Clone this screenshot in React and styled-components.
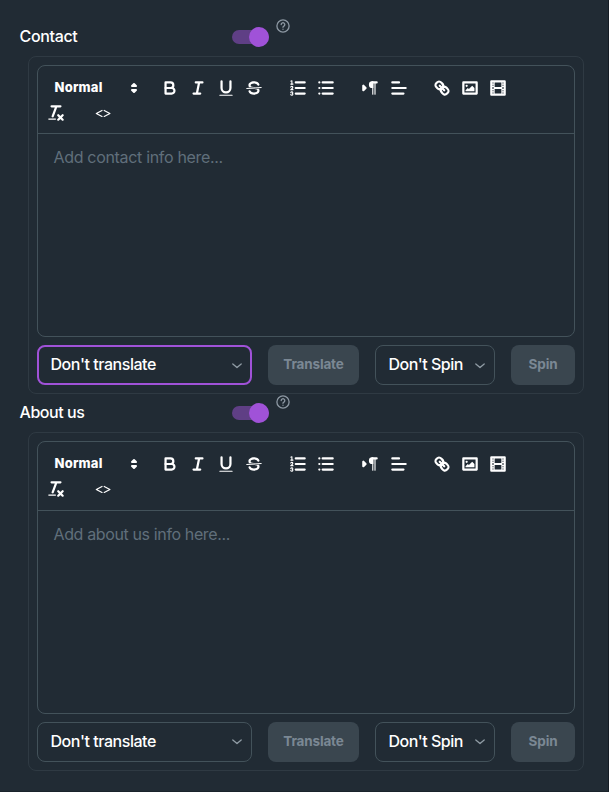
import React from "react";
import styled, { createGlobalStyle } from "styled-components";

const Global = createGlobalStyle`
  *, *::before, *::after { box-sizing: border-box; }
  body {
    margin: 0;
    background: #212b34;
    color: #fff;
    font-family: "Inter", "Liberation Sans", sans-serif;
  }
`;

const Page = styled.main`
  height: 792px;
  padding: 0 24px 0 19px;
  border-right: 1px solid #151c24;
  border-bottom: 1px solid #1a232b;
  overflow: hidden;
`;

const Section = styled.section`
  height: 376.4px;
`;

const Header = styled.div`
  display: flex;
  height: 56px;
  padding-top: 17px;
  align-items: flex-start;
  ${Section} + ${Section} & { padding-top: 16.6px; }
`;

const Title = styled.h2`
  width: 213px;
  margin: 0;
  padding-left: 0.5px;
  font-size: 16px;
  font-weight: 500;
  line-height: 39px;
  letter-spacing: ${(p) => p.$tracking}px;
`;

const Switch = styled.button`
  display: flex;
  align-items: center;
  justify-content: flex-end;
  width: 37px;
  height: 14px;
  margin-top: 13px;
  padding: 0;
  border: 0;
  border-radius: 7px;
  background: #5f3f85;
`;

const Thumb = styled.span`
  flex: none;
  width: 20px;
  height: 20px;
  border-radius: 50%;
  background: #a052d8;
`;

const HelpIcon = styled.svg`
  width: 14px;
  height: 14px;
  margin: 2px 0 0 7px;
  fill: none;
  stroke: #8d98a3;
  stroke-width: 1.3;
  stroke-linecap: round;
`;

const Card = styled.div`
  height: 338.2px;
  margin-left: 9px;
  padding: 8px;
  border: 1px solid #2f3a43;
  border-radius: 8px;
`;

const Editor = styled.div`
  height: 272.2px;
  border: 1px solid #43525a;
  border-radius: 8px;
`;

const Toolbar = styled.div`
  display: flex;
  flex-wrap: wrap;
  align-content: flex-start;
  row-gap: 1px;
  height: 68.3px;
  padding: 10px 8px 0 4px;
  border-bottom: 1px solid #43525a;
`;

const Group = styled.div`
  display: flex;
  height: 24px;
  margin-right: ${(p) => p.$gap ?? 16}px;
`;

const Tool = styled.button`
  display: flex;
  width: 28px;
  height: 24px;
  padding: ${(p) => (p.$shifted ? "1.5px 3px 2px 5px" : "2px 4px")};
  border: 0;
  background: none;
`;

const Glyph = styled.svg`
  flex: none;
  width: ${(p) => p.$size}px;
  height: ${(p) => p.$size}px;
  fill: none;
  stroke: #fff;
  stroke-width: 2;
  stroke-linecap: round;
  stroke-linejoin: round;

  .fill { fill: #fff; stroke: none; }
  .both { fill: #fff; }
  .thin { stroke-width: 1; }
  .code { stroke-width: 1.1; }
`;

const FormatPicker = styled.button`
  display: flex;
  justify-content: space-between;
  width: 101px;
  height: 24px;
  padding: 3px 0 0 12.5px;
  border: 0;
  background: none;
  color: #fff;
  font: 800 13px/17px "Inter", sans-serif;
  letter-spacing: 0.2px;
`;

const Placeholder = styled.p`
  margin: 0;
  padding: 11px 15.5px;
  color: #606f7b;
  font-size: 16px;
  line-height: 24px;
  letter-spacing: ${(p) => p.$tracking}px;
`;

const Actions = styled.div`
  display: grid;
  grid-template-columns: 215px 91px 120px 64px;
  gap: 16px;
  height: 40px;
  margin-top: 8px;
`;

const Select = styled.button`
  display: flex;
  align-items: center;
  justify-content: space-between;
  padding: ${(p) => (p.$active ? "0 7px 2px 11.5px" : "0 8px 2px 12.5px")};
  border: ${(p) => (p.$active ? "2px solid #a052d8" : "1px solid #43525a")};
  border-radius: 8px;
  background: none;
  color: #fff;
  font: 500 16px/24px "Inter", sans-serif;
  letter-spacing: ${(p) => p.$tracking}px;
  white-space: nowrap;
`;

const Chevron = styled.svg`
  flex: none;
  width: 12px;
  height: 12px;
  margin-top: 3px;
  fill: none;
  stroke: #909ca5;
  stroke-width: 1.3;
  stroke-linecap: round;
  stroke-linejoin: round;
`;

const Action = styled.button`
  padding: 0 0 2px;
  border: 0;
  border-radius: 8px;
  background: #3a464f;
  color: #7b8894;
  font: 700 13.5px/20px "Inter", sans-serif;
  letter-spacing: ${(p) => p.$tracking}px;
`;

const icons = {
  bold: (
    <>
      <path d="M5,4H9.5A2.5,2.5,0,0,1,12,6.5v0A2.5,2.5,0,0,1,9.5,9H5Z" />
      <path d="M5,9h5.5A2.5,2.5,0,0,1,13,11.5v0A2.5,2.5,0,0,1,10.5,14H5Z" />
    </>
  ),
  italic: <path d="M7,4H13M5,14H11M8,14L10,4" />,
  underline: (
    <>
      <path d="M5,3V9a4.012,4.012,0,0,0,4,4H9a4.012,4.012,0,0,0,4-4V3" />
      <rect className="fill" x="3" y="15" width="12" height="1" rx="0.5" />
    </>
  ),
  strike: (
    <>
      <path className="thin" d="M15.5,8.5L2.5,9.5" />
      <path className="fill" d="M9.007,8C6.542,7.791,6,7.519,6,6.5,6,5.792,7.283,5,9,5c1.571,0,2.765.679,2.969,1.309a1,1,0,0,0,1.9-.617C13.356,4.106,11.354,3,9,3,6.2,3,4,4.538,4,6.5a3.2,3.2,0,0,0,.5,1.843Z" />
      <path className="fill" d="M8.984,10C11.457,10.208,12,10.479,12,11.5c0,.708-1.283,1.5-3,1.5-1.571,0-2.765-.679-2.969-1.309a1,1,0,1,0-1.9.617C4.644,13.894,6.646,15,9,15c2.8,0,5-1.538,5-3.5a3.2,3.2,0,0,0-.5-1.843Z" />
    </>
  ),
  ordered: (
    <>
      <path d="M7,4H15M7,9H15M7,14H15" />
      <path className="thin" d="M2.5,5.5H4.5" />
      <path className="fill" d="M3.5,6A.5.5,0,0,1,3,5.5V3.085l-.276.138A.5.5,0,0,1,2.053,3c-.124-.247-.023-.324.224-.447l1-.5A.5.5,0,0,1,4,2.5v3A.5.5,0,0,1,3.5,6Z" />
      <path className="thin" d="M4.5,10.5h-2c0-.234,1.85-1.076,1.85-2.234A.959.959,0,0,0,2.5,8.156" />
      <path className="thin" d="M2.5,14.846a.959.959,0,0,0,1.85-.109A.7.7,0,0,0,3.75,14a.688.688,0,0,0,.6-.736.959.959,0,0,0-1.85-.109" />
    </>
  ),
  bullet: <path d="M6,4H15M6,9H15M6,14H15M3,4H3.01M3,9H3.01M3,14H3.01" />,
  direction: (
    <>
      <path className="both" d="M3,11L5,9L3,7Z" />
      <path d="M15,4H11" />
      <path className="fill" d="M11,3a3,3,0,0,0,0,6h1V3Z" />
      <rect className="fill" x="11" y="4" width="1" height="11" />
      <rect className="fill" x="13" y="4" width="1" height="11" />
    </>
  ),
  align: <path d="M3,4H9M3,9H15M3,14H13" />,
  link: (
    <>
      <path d="M7,7L11,11" />
      <path d="M8.9,4.577a3.476,3.476,0,0,1,.36,4.679A3.476,3.476,0,0,1,4.577,8.9C3.185,7.5,2.035,6.4,4.217,4.217S7.5,3.185,8.9,4.577Z" />
      <path d="M13.423,9.1a3.476,3.476,0,0,0-4.679-.36,3.476,3.476,0,0,0,.36,4.679c1.392,1.392,2.5,2.542,4.679.36S14.815,10.5,13.423,9.1Z" />
    </>
  ),
  image: (
    <>
      <rect x="3" y="4" width="12" height="10" />
      <circle className="fill" cx="6" cy="7" r="1" />
      <path className="fill" d="M5,12V11L7,9L8,10L11,7L13,9V12Z" />
    </>
  ),
  video: (
    <>
      <rect x="3" y="3" width="12" height="12" />
      <path className="fill" d="M5,3h1v12h-1ZM12,3h1v12h-1ZM5,8h8v2h-8ZM3,5h3v1h-3ZM3,7h3v1h-3ZM3,10h3v1h-3ZM3,12h3v1h-3ZM12,5h3v1h-3ZM12,7h3v1h-3ZM12,10h3v1h-3ZM12,12h3v1h-3Z" />
    </>
  ),
  clean: (
    <>
      <path d="M5,3H13M6,12L9.35,3M11,11L15,15M15,11L11,15" />
      <rect className="fill" x="2" y="14" width="7" height="1" rx="0.5" />
    </>
  ),
  code: <path className="code" d="M8.1,6.7L3,9.4L8.1,12.1M10.1,6.7L15.2,9.4L10.1,12.1" />,
  picker: <path className="both" d="M7,11L9,13L11,11ZM7,7L9,5L11,7Z" />,
};

const Icon = ({ name, size = 20 }) => (
  <Glyph $size={size} viewBox="0 0 18 18" aria-hidden="true">{icons[name]}</Glyph>
);

const ToolGroup = ({ names, gap }) => (
  <Group $gap={gap}>
    {names.map((name) => (
      <Tool key={name} $shifted={name === "align"} aria-label={name}>
        <Icon name={name} />
      </Tool>
    ))}
  </Group>
);

const Dropdown = ({ label, active, tracking }) => (
  <Select $active={active} $tracking={tracking}>
    {label}
    <Chevron viewBox="0 0 12 12"><path d="M1.8,4L6,7.6L10.2,4" /></Chevron>
  </Select>
);

const EditorSection = ({ title, titleTracking, placeholder, tracking, active }) => (
  <Section>
    <Header>
      <Title $tracking={titleTracking}>{title}</Title>
      <Switch aria-label={title}><Thumb /></Switch>
      <HelpIcon viewBox="0 0 14 14">
        <circle cx="7" cy="7" r="6.1" />
        <path d="M5.2,5.5a1.8,1.8,0,1,1,2.7,1.6c-.6.3-.9.6-.9,1.2M7,10.2V10.3" />
      </HelpIcon>
    </Header>
    <Card>
      <Editor>
        <Toolbar>
          <Group $gap={13}>
            <FormatPicker>Normal<Icon name="picker" size={18} /></FormatPicker>
          </Group>
          <ToolGroup names={["bold", "italic", "underline", "strike"]} />
          <ToolGroup names={["ordered", "bullet"]} />
          <ToolGroup names={["direction", "align"]} />
          <ToolGroup names={["link", "image", "video"]} />
          <ToolGroup names={["clean"]} gap={19} />
          <ToolGroup names={["code"]} />
        </Toolbar>
        <Placeholder $tracking={tracking}>{placeholder}</Placeholder>
      </Editor>
      <Actions>
        <Dropdown label="Don't translate" active={active} tracking={-0.45} />
        <Action $tracking={-0.15}>Translate</Action>
        <Dropdown label="Don't Spin" tracking={-0.5} />
        <Action $tracking={-0.1}>Spin</Action>
      </Actions>
    </Card>
  </Section>
);

export default function App() {
  return (
    <>
      <Global />
      <Page>
        <EditorSection title="Contact" titleTracking={-0.35} placeholder="Add contact info here..." tracking={-0.32} active />
        <EditorSection title="About us" titleTracking={-0.45} placeholder="Add about us info here..." tracking={-0.37} />
      </Page>
    </>
  );
}
